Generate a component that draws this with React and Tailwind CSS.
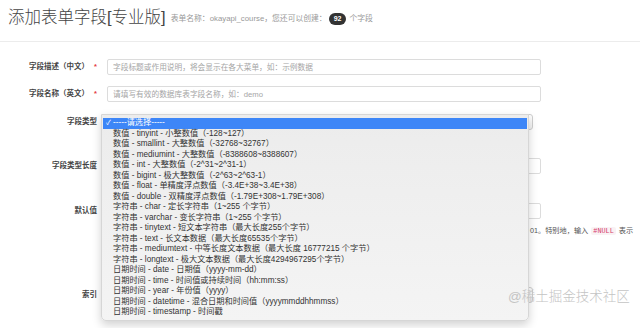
import React from "react";

const typeOptions = [
  "数值 - tinyint - 小整数值（-128~127）",
  "数值 - smallint - 大整数值（-32768~32767）",
  "数值 - mediumint - 大整数值（-8388608~8388607）",
  "数值 - int - 大整数值（-2^31~2^31-1）",
  "数值 - bigint - 极大整数值（-2^63~2^63-1）",
  "数值 - float - 单精度浮点数值（-3.4E+38~3.4E+38）",
  "数值 - double - 双精度浮点数值（-1.79E+308~1.79E+308）",
  "字符串 - char - 定长字符串（1~255 个字节）",
  "字符串 - varchar - 变长字符串（1~255 个字节）",
  "字符串 - tinytext - 短文本字符串（最大长度255个字节）",
  "字符串 - text - 长文本数据（最大长度65535个字节）",
  "字符串 - mediumtext - 中等长度文本数据（最大长度 16777215 个字节）",
  "字符串 - longtext - 极大文本数据（最大长度4294967295个字节）",
  "日期时间 - date - 日期值（yyyy-mm-dd）",
  "日期时间 - time - 时间值或持续时间（hh:mm:ss）",
  "日期时间 - year - 年份值（yyyy）",
  "日期时间 - datetime - 混合日期和时间值（yyyymmddhhmmss）",
  "日期时间 - timestamp - 时间戳",
];

const Label = ({ text, required }) => (
  <div className="w-[97px] shrink-0 text-right text-[7.5px] font-bold text-[#444]">
    {text}
    {required && <span className="ml-[5px] text-[#e4393c]">*</span>}
  </div>
);

const TextInput = ({ placeholder = "" }) => (
  <input
    readOnly
    placeholder={placeholder}
    className="ml-[10px] w-[434px] h-[16px] rounded-[2px] border border-[#dcdcdc] bg-white px-[5px] text-[7.7px] outline-none placeholder:text-[#a5a5a5]"
  />
);

const Chevron = () => (
  <svg width="5" height="6" viewBox="0 0 5 6" className="shrink-0">
    <path d="M1 1.5 L2.5 0.3 L4 1.5 M1 4.5 L2.5 5.7 L4 4.5" fill="none" stroke="#555" strokeWidth="0.8" />
  </svg>
);

const SelectBox = () => (
  <div className="ml-[10px] w-[426px] h-[16px] rounded-[3px] border border-[#cfcfcf] bg-gradient-to-b from-white to-[#f2f2f2] flex items-center justify-end pr-[2px]">
    <Chevron />
  </div>
);

export default function App() {
  return (
    <div className="relative w-[640px] h-[328px] overflow-hidden bg-white text-[#333] font-['Liberation_Sans','Noto_Sans_CJK_SC',sans-serif]">
      {/* header */}
      <div className="h-[42px] border-b border-[#ececec] pl-[8px] pt-[4px] flex items-start">
        <div className="flex items-center h-[27px]">
          <h1 className="text-[16.5px] font-light text-[#444] leading-none">添加表单字段[专业版]</h1>
          <span className="ml-[5px] mt-[3px] text-[7.8px] text-[#999]">表单名称：okayapi_course，您还可以创建：</span>
          <span className="ml-[2px] mt-[3px] h-[12px] px-[5px] rounded-full bg-[#333] text-white text-[7px] font-bold flex items-center">92</span>
          <span className="ml-[3px] mt-[3px] text-[7.8px] text-[#999]">个字段</span>
        </div>
      </div>

      {/* form */}
      <div className="flex flex-col">
        <div className="mt-[17px] flex items-center">
          <Label text="字段描述（中文）" required />
          <TextInput placeholder="字段标题或作用说明，将会显示在各大菜单，如：示例数据" />
        </div>
        <div className="mt-[11px] flex items-center">
          <Label text="字段名称（英文）" required />
          <TextInput placeholder="请填写有效的数据库表字段名称，如：demo" />
        </div>
        <div className="mt-[12px] flex items-center">
          <Label text="字段类型" />
          <SelectBox />
        </div>
        <div className="mt-[28px] flex items-center">
          <Label text="字段类型长度" />
          <TextInput />
        </div>
        <div className="mt-[29px] flex items-center">
          <Label text="默认值" />
          <TextInput />
        </div>
        <p className="mt-[6px] pl-[530px] whitespace-nowrap text-[7.2px] text-[#555] leading-[12px]">
          01。特别地，输入
          <span className="mx-[3px] px-[2px] rounded-[2px] bg-[#f9f2f4] text-[#d63a6b] font-['Liberation_Mono',monospace] text-[6.8px]">#NULL</span>
          表示
        </p>
        <div className="mt-[50px] flex items-center">
          <Label text="索引" />
          <SelectBox />
        </div>
      </div>

      {/* open dropdown */}
      <div className="absolute left-[101px] top-[114px] w-[428px] pt-[3px] pb-[2px] rounded-b-[5px] border border-[#d6d6d6] bg-gradient-to-b from-[#ececec] to-[#f4f4f4] shadow-[0_4px_10px_rgba(0,0,0,0.18)]">
        <div className="mx-[1px] h-[10.5px] bg-[#3d86f7] text-white text-[8.2px] leading-[10.5px] flex items-center">
          <span className="w-[10px] pl-[3px] text-[7px]">✓</span>
          <span>-----请选择-----</span>
        </div>
        {typeOptions.map((opt) => (
          <div key={opt} className="h-[10.5px] pl-[11px] text-[8.2px] leading-[10.5px] text-[#333] whitespace-nowrap">
            {opt}
          </div>
        ))}
      </div>

      {/* watermark */}
      <div className="absolute left-[508px] top-[290px] text-[13.5px] font-light text-[#c4c4c4] leading-none">@稀土掘金技术社区</div>
    </div>
  );
}
